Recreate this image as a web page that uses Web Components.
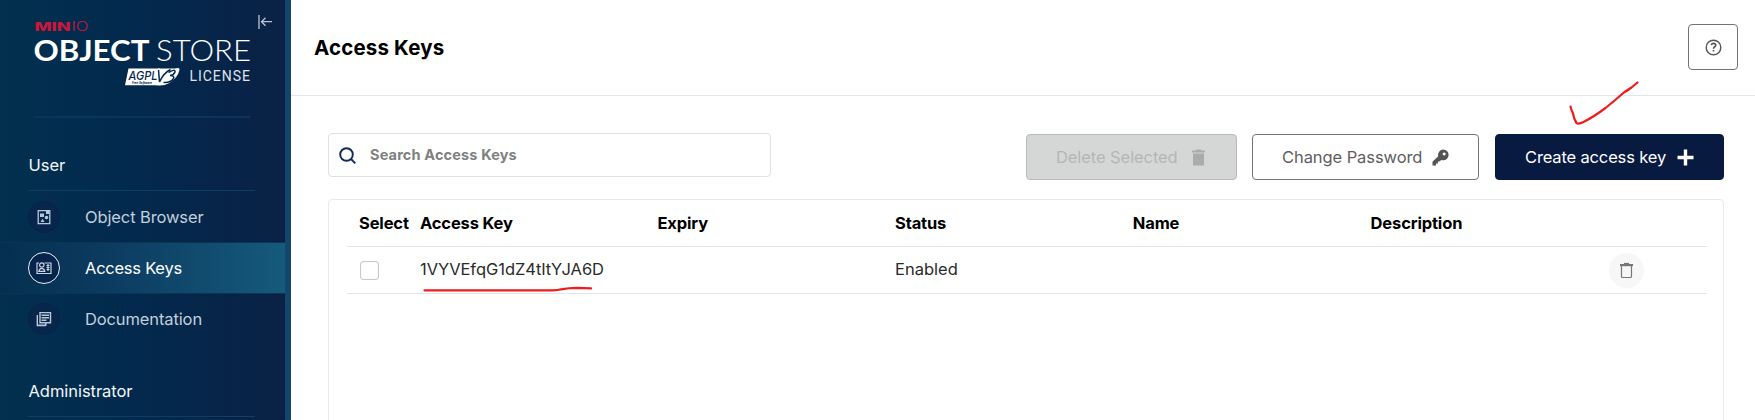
<!DOCTYPE html>
<html lang="en">
<head>
<meta charset="utf-8">
<title>Access Keys</title>
<style>
html,body{margin:0;height:100%;overflow:hidden;background:#fff}
body{font-family:Inter,"Liberation Sans",sans-serif;font-size:16.5px;color:#000}
</style>
</head>
<body>
<console-app></console-app>
<script>
function define(name, html) {
  const t = document.createElement('template');
  t.innerHTML = html;
  customElements.define(name, class extends HTMLElement {
    constructor() {
      super();
      this.attachShadow({mode: 'open'}).appendChild(t.content.cloneNode(true));
    }
  });
}

define('brand-logo', `
<style>:host{display:block;height:118px;box-sizing:border-box;margin:0 35px 0 34px;border-bottom:2px solid #0a3459}
svg{display:block;overflow:visible}</style>
<svg width="216" height="115" viewBox="34 0 216 115" fill="#fff">
  <text x="34.5" y="31" font-size="12.4" font-weight="800" fill="#c9173b" textLength="36" lengthAdjust="spacingAndGlyphs">MIN</text>
  <text x="71.500" y="31" font-size="12.4" font-weight="300" fill="#c9173b" textLength="17" lengthAdjust="spacingAndGlyphs">IO</text>
  <text x="33.500" y="60.5" font-family="Lato" font-size="29" font-weight="700" textLength="116" lengthAdjust="spacingAndGlyphs">OBJECT</text>
  <text x="156" y="60.5" font-family="Lato" font-size="29" font-weight="300" textLength="95" lengthAdjust="spacingAndGlyphs">STORE</text>
  <path d="M128.5 68.5H160L157 85.3H125Z"/>
  <path d="M158 68.500h17q5.500-1.500 4.300 2q-1.500 7-10 12.500q-6 3.500-13 2.300z"/>
  <text x="128.500" y="80" font-size="12" font-style="italic" font-weight="500" fill="#04284f" textLength="29" lengthAdjust="spacingAndGlyphs">AGPL</text>
  <text x="132" y="84.300" font-size="3.500" font-weight="700" font-style="italic" fill="#04284f" textLength="20" lengthAdjust="spacingAndGlyphs">Free Software</text>
  <g fill="none" stroke="#04284f" stroke-width="1.500"><path d="M158.500 70l1 12q4-9 11-12.500"/><path d="M168.500 72.500q7-4 6.500-.5q-1 3-5 3.500q5 0 3.500 3q-3 4.500-10 4"/></g>
  <text x="189.500" y="80.800" font-size="14" font-family="Roboto" textLength="60.500" fill="#dfe5ec">LICENSE</text>
</svg>`);

define('collapse-toggle', `
<style>:host{display:block;position:absolute;left:257px;top:14px}svg{display:block}</style>
<svg width="16" height="16" fill="none" stroke="#b9c4d2" stroke-width="1.300"><path d="M2 1v14M15 7.700H5M8.500 3.700l-4 4l4 4"/></svg>`);

define('menu-group', `
<style>:host{display:block;margin:0 30px 0 28px;height:50px;border-bottom:1px solid #0b3f66;box-sizing:border-box;color:#f4f6f8;line-height:50px;letter-spacing:-.05px}
span{display:block;padding-left:.5px;position:relative;top:-1px}</style><span><slot></slot></span>`);

define('menu-item', `
<style>:host{display:flex;align-items:center;height:51px;padding-left:28px;gap:25px;color:#c2cfdc;letter-spacing:-.12px}
i{display:grid;place-items:center;width:32px;height:32px;box-sizing:border-box;border-radius:50%;background:#08264b;border:1px solid #07234a}
:host([active]){background:linear-gradient(90deg,#042f4f 0%,#0c3b60 38%,#155a7c 100%);color:#fff;box-shadow:inset 0 1px #0a3555,inset 0 -1px #0a3555;letter-spacing:-.25px}
:host([active]) i{background:#07254c;border:1px solid #e8edf2}</style>
<i><slot name="icon"></slot></i><span><slot></slot></span>`);

define('side-nav', `
<style>:host{display:block;position:relative;width:291px;height:420px;box-sizing:border-box;border-right:6px solid #12466d;background:linear-gradient(90deg,#03304f 0%,#02294d 48%,#0a2145 100%);overflow:hidden}
.first{margin-top:23px}
.second{margin-top:23px}</style>
<brand-logo></brand-logo>
<collapse-toggle></collapse-toggle>
<menu-group class="first">User</menu-group>
<menu-item>
  <svg slot="icon" width="14" height="16" fill="none" stroke="#b9c8d8" stroke-width="1.300"><path d="M1.200 1.600h11.600v13H1.200z"/><path fill="#b9c8d8" stroke="none" d="M3 4.500h4v3.500H3zM7.700 8.500a1.800 1.800 0 1 0 3.600 0a1.800 1.800 0 1 0-3.600 0M3.500 13l2-3.200l2 3.200zM9 2h3v3h-3z"/></svg>
  Object Browser</menu-item>
<menu-item active style="height:52px">
  <svg slot="icon" width="16" height="14" fill="none" stroke="#c7d2df" stroke-width="1.200"><path d="M3 2H1v10.500h14V2H8.500"/><circle cx="5.800" cy="4" r="2.200"/><path d="M2.800 10.300q.5-3 3-3t3 3zM10.500 4.500h3M10.500 6.500h3M10.500 8.500h3M12 3v7"/></svg>
  Access Keys</menu-item>
<menu-item style="height:50px">
  <svg slot="icon" width="16" height="16" fill="none" stroke="#b9c8d8" stroke-width="1.400"><path d="M4 1.600h10.500v10.200H4zM1.300 4v10.500h8.500M1.300 14.300h8.500v-2M5.500 4.200h7.500M5.500 6.700h7.500M5.500 9.200h5"/></svg>
  Documentation</menu-item>
<menu-group class="second">Administrator</menu-group>`);

define('push-button', `
<style>:host{display:flex;align-items:center;justify-content:space-between;height:46px;box-sizing:border-box;border:1px solid #717578;border-radius:4px;padding:0 29px 0 29px;color:#5e5e5e;background:#fff;white-space:nowrap;letter-spacing:-.08px}
:host([disabled]){background:#d5d7d7;border-color:#b9bbbb;color:#b4b6b6}
:host([primary]){background:#081a40;border-color:#081a40;color:#fff}
:host([square]){width:50px;padding:0;justify-content:center}
::slotted(svg){display:block}</style>
<slot></slot><slot name="icon"></slot>`);

define('page-header', `
<style>:host{display:flex;align-items:center;justify-content:space-between;height:96px;box-sizing:border-box;border-bottom:1px solid #e5e5e5;padding:0 17px 1px 23px}
h1{margin:0;font-size:20.500px;font-weight:700;letter-spacing:.16px}</style>
<h1><slot></slot></h1>
<push-button square><svg slot="icon" width="17" height="17" fill="none" stroke="#55585a" stroke-width="1.400"><circle cx="8.500" cy="8.500" r="7.300"/><path d="M6.300 6.100q.4-1.700 2.200-1.700q2.200 0 2.200 1.800q0 1.200-1.200 1.800q-1 .5-1 1.700M8.500 11v1.600" stroke-width="1.600"/></svg></push-button>`);

define('search-box', `
<style>:host{display:flex;align-items:center;width:443px;height:44px;box-sizing:border-box;border:1px solid #e1e1e1;border-radius:4px;padding:0 10px;gap:14px;font-size:14.500px;font-weight:700;color:#808080}
svg{display:block}span{letter-spacing:.15px;position:relative;top:-1px}</style>
<svg width="17" height="17" fill="none" stroke="#132a55" stroke-width="1.900"><circle cx="7.500" cy="7.500" r="6.300"/><path d="M12 12l4.300 4.300"/></svg>
<span><slot></slot></span>`);

define('check-box', `
<style>:host{display:block;width:19px;height:19px;box-sizing:border-box;border:1px solid #c9c9c9;border-radius:3px;background:#fff;box-shadow:inset 0 0 1px #ccc;margin-left:.5px}</style>`);

define('row-action', `
<style>:host{display:grid;place-items:center;width:35px;height:35px;border-radius:50%;background:#f7f7f7}</style>
<svg width="15" height="17" fill="none" stroke="#777" stroke-width="1.200"><path d="M2.500 4v10.500q0 1 1 1h8q1 0 1-1V4"/><path d="M1 3.100h13" stroke-width="2.200"/><path d="M5 1.500h5"/></svg>`);

define('table-row', `
<style>:host{display:grid;grid-template-columns:61px 237.500px 237.500px 237.800px 237.800px 220px 1fr;align-items:center;height:47px;box-sizing:border-box;border-bottom:1px solid #e5e5e5;padding-left:12px;color:#2b2b2b;white-space:nowrap}
:host([head]){font-weight:700;color:#000;letter-spacing:-.15px}</style><slot></slot>`);

define('keys-table', `
<style>:host{display:block;height:240px;box-sizing:border-box;border:1px solid #e9e9e9;border-radius:4px;padding:0 16px 0 18px}
table-row[head] span{position:relative;top:-.5px}
row-action{justify-self:start;margin-left:18.500px}
.key{position:relative;top:-1px;letter-spacing:-.05px}.st{position:relative;top:-1px}</style>
<table-row head><span>Select</span><span>Access Key</span><span>Expiry</span><span>Status</span><span>Name</span><span>Description</span></table-row>
<table-row><check-box></check-box><span class="key">1VYVEfqG1dZ4tItYJA6D</span><span></span><span class="st">Enabled</span><span></span><span></span><row-action></row-action></table-row>`);

define('pen-marks', `
<style>:host{position:absolute;inset:0;pointer-events:none}svg{display:block}</style>
<svg width="1755" height="420" fill="none" stroke="#ee1c1c" stroke-width="2.200" stroke-linecap="round" stroke-linejoin="round">
<path d="M1570.500 106.500q1 4 2.500 7q1 6 3.500 9.500q2 1.500 7-1q10-5 22-14q10-8 19-16q5-3 7-4.500l6-5"/>
<path d="M424.500 290.300H553q5 0 8-1q8-1.500 16-1.500l14 .600"/></svg>`);

define('console-app', `
<style>:host{display:flex;position:relative;width:1755px;height:420px;overflow:hidden}
main{flex:1;min-width:0}
.content{padding:37px 31px 0 37px}
.bar{display:flex;align-items:flex-start;height:66px}
.actions{display:flex;margin-left:auto;padding-top:1px}
.del{width:211px;margin-right:15px}.pwd{width:227px;margin-right:16px}.new{width:229px;letter-spacing:-.15px}</style>
<side-nav></side-nav>
<main>
<page-header>Access Keys</page-header>
<div class="content">
<div class="bar"><search-box>Search Access Keys</search-box>
<div class="actions">
<push-button class="del" disabled>Delete Selected<svg slot="icon" width="17" height="17" fill="#aaacac"><path d="M2 1.500h3.500l1-1h4l1 1H15v2H2zM3 4.500h11V16.500H3z"/></svg></push-button>
<push-button class="pwd">Change Password<svg slot="icon" width="17" height="17"><path fill="#555" fill-rule="evenodd" d="M11.200.5a5.400 5.400 0 0 1 0 10.800q-1.200 0-2-.3L7.500 12.500H6v2H4v2H.5v-3.700L6.200 7.300A5.400 5.400 0 0 1 11.200.5zM12.200 3.400a1.500 1.500 0 1 0 .01 0z"/></svg></push-button>
<push-button class="new" primary>Create access key<svg slot="icon" width="17" height="17" stroke="#fff" stroke-width="3.400"><path d="M8.500.5v16M.5 8.500h16"/></svg></push-button>
</div></div>
<keys-table></keys-table>
</div>
</main>
<pen-marks></pen-marks>`);
</script>
</body>
</html>
